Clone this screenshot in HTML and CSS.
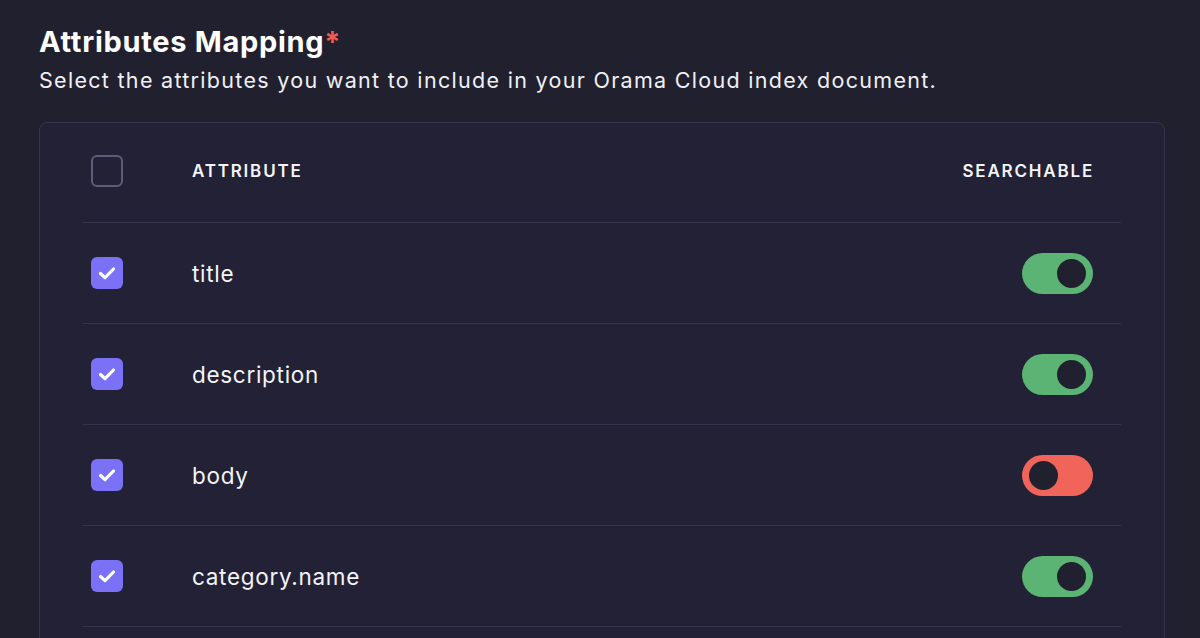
FILE: index.html
```html
<!DOCTYPE html>
<html>
<head>
<meta charset="utf-8">
<link rel="stylesheet" href="styles.css">
</head>
<body>
<div class="page">
  <h1 class="title">Attributes Mapping<span class="req">*</span></h1>
  <p class="subtitle">Select the attributes you want to include in your Orama Cloud index document.</p>
  <div class="card">
    <div class="row head">
      <span class="cb"></span>
      <span class="name">ATTRIBUTE</span>
      <span class="col-right">SEARCHABLE</span>
    </div>
    <div class="row">
      <span class="cb on"><svg viewBox="0 0 32 32" width="32" height="32"><path d="M9.5 16.5l4.5 4.2 8.5-8.7" fill="none" stroke="#fff" stroke-width="3.2" stroke-linecap="round" stroke-linejoin="round"/></svg></span>
      <span class="name">title</span>
      <span class="toggle green"><span class="knob"></span></span>
    </div>
    <div class="row">
      <span class="cb on"><svg viewBox="0 0 32 32" width="32" height="32"><path d="M9.5 16.5l4.5 4.2 8.5-8.7" fill="none" stroke="#fff" stroke-width="3.2" stroke-linecap="round" stroke-linejoin="round"/></svg></span>
      <span class="name">description</span>
      <span class="toggle green"><span class="knob"></span></span>
    </div>
    <div class="row">
      <span class="cb on"><svg viewBox="0 0 32 32" width="32" height="32"><path d="M9.5 16.5l4.5 4.2 8.5-8.7" fill="none" stroke="#fff" stroke-width="3.2" stroke-linecap="round" stroke-linejoin="round"/></svg></span>
      <span class="name">body</span>
      <span class="toggle red"><span class="knob"></span></span>
    </div>
    <div class="row">
      <span class="cb on"><svg viewBox="0 0 32 32" width="32" height="32"><path d="M9.5 16.5l4.5 4.2 8.5-8.7" fill="none" stroke="#fff" stroke-width="3.2" stroke-linecap="round" stroke-linejoin="round"/></svg></span>
      <span class="name">category.name</span>
      <span class="toggle green"><span class="knob"></span></span>
    </div>
    <div class="row empty"></div>
  </div>
</div>
</body>
</html>
```

FILE: styles.css
```css
html, body {
  margin: 0;
  padding: 0;
  background: #21202f;
  height: 638px;
  overflow: hidden;
}
body {
  font-family: Inter, "Noto Sans", sans-serif;
  color: #f4f4f8;
}
.page {
  padding: 23px 35px 0 39px;
}
.title {
  margin: 0;
  font-size: 29px;
  line-height: 38px;
  font-weight: 700;
  letter-spacing: 0.7px;
  color: #ffffff;
}
.req {
  color: #ef5b4f;
  font-weight: 700;
}
.subtitle {
  margin: 4px 0 0;
  font-size: 21.5px;
  line-height: 30px;
  letter-spacing: 1.3px;
  color: #f0f0f4;
}
.card {
  margin-top: 27px;
  border: 1px solid #34344b;
  border-radius: 8px;
  background: #222135;
  padding: 0 43px;
}
.row {
  display: flex;
  align-items: center;
  height: 100px;
  box-sizing: content-box;
  border-bottom: 1px solid #34344b;
  padding: 0 28px 0 8px;
}
.row.head {
  height: 96px;
  padding-bottom: 3px;
}
.row.empty {
  border-bottom: none;
}
.cb {
  width: 32px;
  height: 32px;
  box-sizing: border-box;
  border-radius: 6px;
  border: 2px solid #5e5d78;
  flex: none;
  display: flex;
}
.cb.on {
  border: none;
  background: #7a71f6;
}
.name {
  margin-left: 69px;
  font-size: 22.5px;
  letter-spacing: 0.7px;
  flex: 1;
}
.head .name, .col-right {
  font-size: 17px;
  font-weight: 600;
  letter-spacing: 1.8px;
}
.col-right {
  margin-right: -1px;
}
.toggle {
  width: 71px;
  height: 41px;
  border-radius: 21px;
  box-sizing: border-box;
  padding: 6px 7px;
  display: flex;
  justify-content: flex-end;
}
.toggle.red {
  justify-content: flex-start;
}
.green { background: #5bb473; }
.red { background: #f1645a; }
.knob {
  width: 29px;
  height: 29px;
  border-radius: 50%;
  background: #21202f;
}
```
